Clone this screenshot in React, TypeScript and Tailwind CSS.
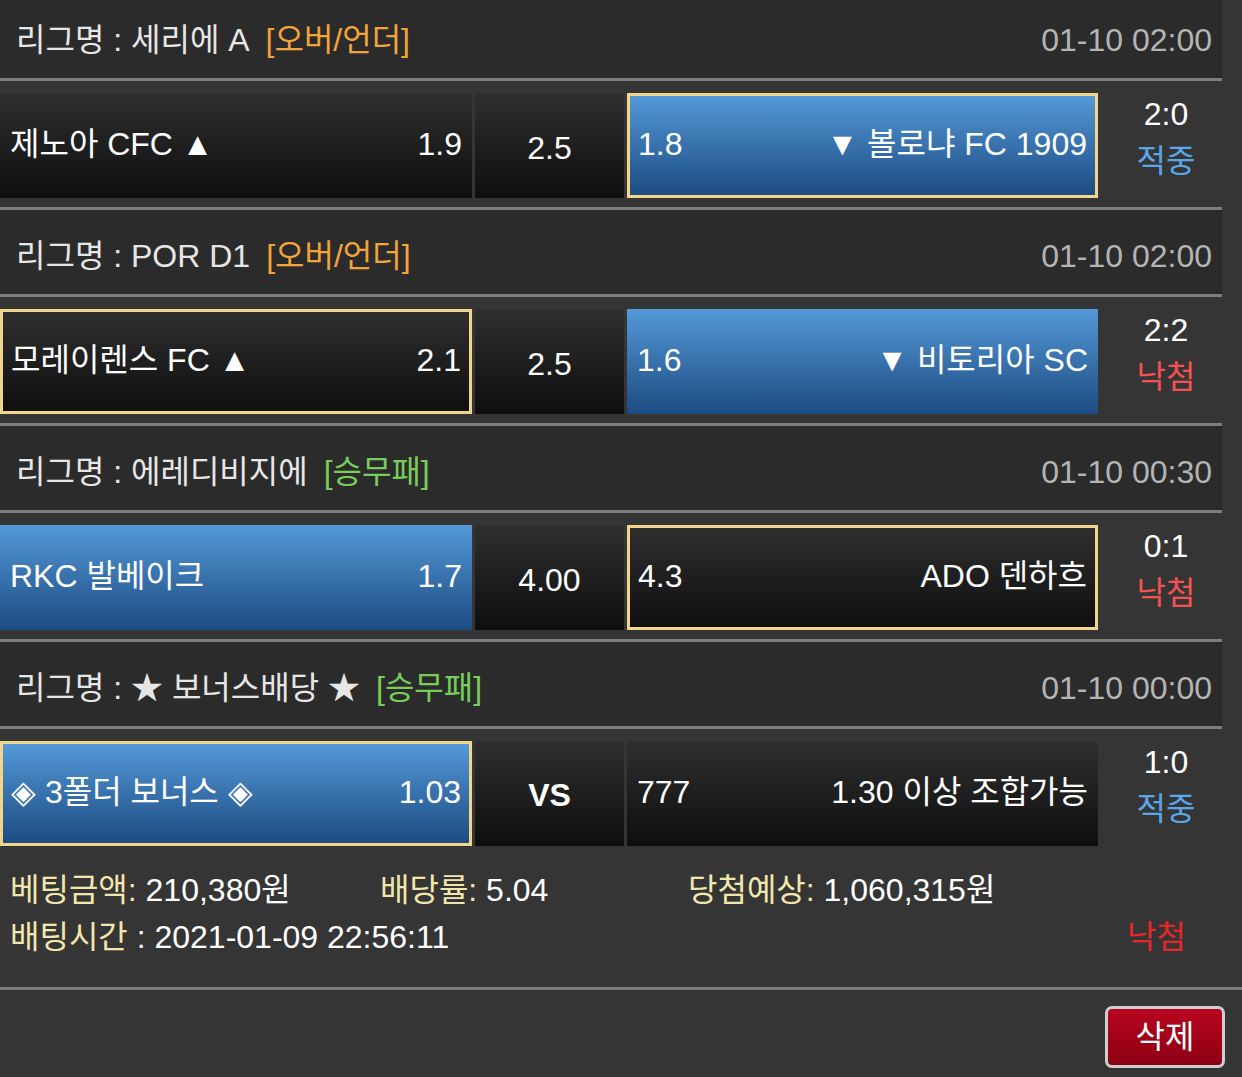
type Match = {
  league: string;
  tag: string;
  tagColor: "orange" | "green";
  time: string;
  home: string;
  homeOdds: string;
  mid: string;
  midBold?: boolean;
  awayOdds: string;
  away: string;
  homeBlue?: boolean;
  homePick?: boolean;
  awayBlue?: boolean;
  awayPick?: boolean;
  score: string;
  result: "적중" | "낙첨";
};

const matches: Match[] = [
  {
    league: "세리에 A",
    tag: "[오버/언더]",
    tagColor: "orange",
    time: "01-10 02:00",
    home: "제노아 CFC ▲",
    homeOdds: "1.9",
    mid: "2.5",
    awayOdds: "1.8",
    away: "▼ 볼로냐 FC 1909",
    awayBlue: true,
    awayPick: true,
    score: "2:0",
    result: "적중",
  },
  {
    league: "POR D1",
    tag: "[오버/언더]",
    tagColor: "orange",
    time: "01-10 02:00",
    home: "모레이렌스 FC ▲",
    homeOdds: "2.1",
    mid: "2.5",
    awayOdds: "1.6",
    away: "▼ 비토리아 SC",
    homePick: true,
    awayBlue: true,
    score: "2:2",
    result: "낙첨",
  },
  {
    league: "에레디비지에",
    tag: "[승무패]",
    tagColor: "green",
    time: "01-10 00:30",
    home: "RKC 발베이크",
    homeOdds: "1.7",
    mid: "4.00",
    awayOdds: "4.3",
    away: "ADO 덴하흐",
    homeBlue: true,
    awayPick: true,
    score: "0:1",
    result: "낙첨",
  },
  {
    league: "★ 보너스배당 ★",
    tag: "[승무패]",
    tagColor: "green",
    time: "01-10 00:00",
    home: "◈ 3폴더 보너스 ◈",
    homeOdds: "1.03",
    mid: "VS",
    midBold: true,
    awayOdds: "777",
    away: "1.30 이상 조합가능",
    homeBlue: true,
    homePick: true,
    score: "1:0",
    result: "적중",
  },
];

const Cell = ({
  blue,
  pick,
  width,
  children,
}: {
  blue?: boolean;
  pick?: boolean;
  width: string;
  children: React.ReactNode;
}) => (
  <div
    className={`${width} mt-[12px] h-[105px] flex items-center justify-between pb-[4px] ${
      blue
        ? "bg-gradient-to-b from-[#5499d8] to-[#1d4c82]"
        : "bg-gradient-to-b from-[#2f2f2f] to-[#0f0f0f]"
    } ${pick ? "border-[3px] border-[#f2d58c] px-[8px]" : "px-[10px]"}`}
  >
    {children}
  </div>
);

const MatchBlock = ({ m, last }: { m: Match; last: boolean }) => (
  <div>
    <div className="h-[84px] bg-[#2b2b2b] flex items-center justify-between pl-[16px] pr-[10px] pt-[8px]">
      <div className="text-[#e6e6e6]">
        리그명 : {m.league}
        <span
          className={`ml-[16px] ${
            m.tagColor === "orange" ? "text-[#f2a33a]" : "text-[#78cc5a]"
          }`}
        >
          {m.tag}
        </span>
      </div>
      <div className="text-[#b4b4b4]">{m.time}</div>
    </div>
    <div className="h-[3px] bg-[#7c7c7c]" />
    <div className="h-[126px] flex">
      <Cell blue={m.homeBlue} pick={m.homePick} width="w-[472px]">
        <span>{m.home}</span>
        <span>{m.homeOdds}</span>
      </Cell>
      <div className="w-[3px]" />
      <div className="w-[149px] mt-[12px] h-[105px] flex items-center justify-center bg-gradient-to-b from-[#2f2f2f] to-[#0f0f0f]">
        <span className={m.midBold ? "font-bold pt-[2px]" : "pt-[4px]"}>{m.mid}</span>
      </div>
      <div className="w-[3px]" />
      <Cell blue={m.awayBlue} pick={m.awayPick} width="w-[471px]">
        <span>{m.awayOdds}</span>
        <span>{m.away}</span>
      </Cell>
      <div className="w-[124px] pl-[12px] flex flex-col items-center pt-[10px] leading-[47px]">
        <span>{m.score}</span>
        <span
          className={m.result === "적중" ? "text-[#5ba6e8]" : "text-[#f25252]"}
        >
          {m.result}
        </span>
      </div>
    </div>
    {!last && <div className="h-[3px] bg-[#7c7c7c]" />}
  </div>
);

export default function App() {
  return (
    <div className="w-[1242px] h-[1077px] overflow-hidden bg-[#353535] text-white text-[32px] leading-[40px] font-['Liberation_Sans','Noto_Sans_CJK_KR',sans-serif]">
      <div className="w-[1222px] -mt-[6px]">
        {matches.map((m, i) => (
          <MatchBlock key={i} m={m} last={i === matches.length - 1} />
        ))}
      </div>
      <div className="pt-[12px] pb-[26px] pl-[10px] leading-[47px]">
        <div className="flex">
          <div className="w-[370px]">
            <span className="text-[#f1e7ac]">베팅금액:</span> 210,380원
          </div>
          <div className="w-[308px]">
            <span className="text-[#f1e7ac]">배당률:</span> 5.04
          </div>
          <div>
            <span className="text-[#f1e7ac]">당첨예상:</span> 1,060,315원
          </div>
        </div>
        <div className="flex justify-between pr-[56px]">
          <div>
            <span className="text-[#f1e7ac]">배팅시간</span> : 2021-01-09 22:56:11
          </div>
          <div className="text-[#e8262a]">낙첨</div>
        </div>
      </div>
      <div className="h-[3px] bg-[#7c7c7c]" />
      <div className="flex justify-end pt-[16px] pr-[17px]">
        <button className="w-[120px] h-[62px] rounded-[7px] border-[3px] border-[#cfcfcf] bg-gradient-to-b from-[#b8051f] to-[#8c0013] text-white flex items-center justify-center">
          삭제
        </button>
      </div>
    </div>
  );
}
